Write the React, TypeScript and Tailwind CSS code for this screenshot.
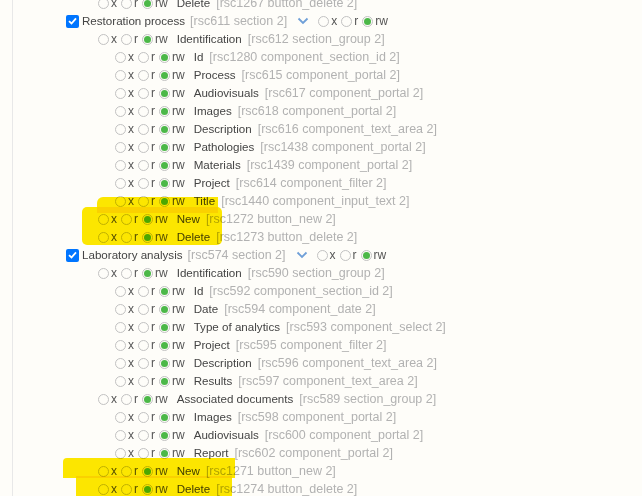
import React from "react";

type Row = { level: 0 | 1 | 2; label: string; meta: string };

const rows: Row[] = [
  { level: 1, label: "Delete", meta: "[rsc1267 button_delete 2]" },
  { level: 0, label: "Restoration process", meta: "[rsc611 section 2]" },
  { level: 1, label: "Identification", meta: "[rsc612 section_group 2]" },
  { level: 2, label: "Id", meta: "[rsc1280 component_section_id 2]" },
  { level: 2, label: "Process", meta: "[rsc615 component_portal 2]" },
  { level: 2, label: "Audiovisuals", meta: "[rsc617 component_portal 2]" },
  { level: 2, label: "Images", meta: "[rsc618 component_portal 2]" },
  { level: 2, label: "Description", meta: "[rsc616 component_text_area 2]" },
  { level: 2, label: "Pathologies", meta: "[rsc1438 component_portal 2]" },
  { level: 2, label: "Materials", meta: "[rsc1439 component_portal 2]" },
  { level: 2, label: "Project", meta: "[rsc614 component_filter 2]" },
  { level: 2, label: "Title", meta: "[rsc1440 component_input_text 2]" },
  { level: 1, label: "New", meta: "[rsc1272 button_new 2]" },
  { level: 1, label: "Delete", meta: "[rsc1273 button_delete 2]" },
  { level: 0, label: "Laboratory analysis", meta: "[rsc574 section 2]" },
  { level: 1, label: "Identification", meta: "[rsc590 section_group 2]" },
  { level: 2, label: "Id", meta: "[rsc592 component_section_id 2]" },
  { level: 2, label: "Date", meta: "[rsc594 component_date 2]" },
  { level: 2, label: "Type of analytics", meta: "[rsc593 component_select 2]" },
  { level: 2, label: "Project", meta: "[rsc595 component_filter 2]" },
  { level: 2, label: "Description", meta: "[rsc596 component_text_area 2]" },
  { level: 2, label: "Results", meta: "[rsc597 component_text_area 2]" },
  { level: 1, label: "Associated documents", meta: "[rsc589 section_group 2]" },
  { level: 2, label: "Images", meta: "[rsc598 component_portal 2]" },
  { level: 2, label: "Audiovisuals", meta: "[rsc600 component_portal 2]" },
  { level: 2, label: "Report", meta: "[rsc602 component_portal 2]" },
  { level: 1, label: "New", meta: "[rsc1271 button_new 2]" },
  { level: 1, label: "Delete", meta: "[rsc1274 button_delete 2]" },
];

function Radio({ on }: { on?: boolean }) {
  return (
    <span className="flex h-[11px] w-[11px] shrink-0 items-center justify-center rounded-full border border-[#c2c2c2]">
      {on && <span className="h-[7px] w-[7px] rounded-full bg-[#4cb848]" />}
    </span>
  );
}

function Perms() {
  return (
    <span className="flex items-center text-[12px] text-[#555]">
      <Radio />
      <span className="ml-[2px] mr-[4px]">x</span>
      <Radio />
      <span className="ml-[2px] mr-[4px]">r</span>
      <Radio on />
      <span className="ml-[2px]">rw</span>
    </span>
  );
}

function Checkbox() {
  return (
    <span className="flex h-[13px] w-[13px] items-center justify-center rounded-[2px] bg-[#0075ff]">
      <svg width="9" height="8" viewBox="0 0 9 8">
        <path d="M1 4.2 L3.5 6.5 L8 1.3" fill="none" stroke="white" strokeWidth="1.8" />
      </svg>
    </span>
  );
}

function TreeRow({ row }: { row: Row }) {
  if (row.level === 0) {
    return (
      <div className="flex h-[18px] items-center pl-[66px]">
        <Checkbox />
        <span className="ml-[3px] text-[11.6px] text-[#444]">{row.label}</span>
        <span className="ml-[5px] text-[12.5px] text-[#b2b2b2]">{row.meta}</span>
        <svg className="ml-[10px]" width="12" height="8" viewBox="0 0 12 8">
          <path d="M1.5 1.5 L6 6 L10.5 1.5" fill="none" stroke="#6f9fd8" strokeWidth="1.8" />
        </svg>
        <span className="ml-[9px]">
          <Perms />
        </span>
      </div>
    );
  }
  return (
    <div className={`flex h-[18px] items-center ${row.level === 1 ? "pl-[98px]" : "pl-[115px]"}`}>
      <Perms />
      <span className="ml-[9px] text-[11.6px] text-[#444]">{row.label}</span>
      <span className="ml-[6px] text-[12.5px] text-[#b2b2b2]">{row.meta}</span>
    </div>
  );
}

export default function App() {
  return (
    <div className="relative h-[496px] w-[642px] overflow-hidden bg-[#fefdf9] font-['Liberation_Sans',Arial,sans-serif]">
      <div className="absolute left-[12px] top-0 h-full w-px bg-[#e8e8e8]" />
      <div className="-mt-[6px] flex flex-col">
        {rows.map((r, i) => (
          <TreeRow key={i} row={r} />
        ))}
      </div>
      {/* highlighter marks */}
      <div className="pointer-events-none absolute left-[97px] top-[197px] h-[16px] w-[121px] rounded-tl-[6px] bg-[#fde800] mix-blend-multiply" />
      <div className="pointer-events-none absolute left-[82px] top-[207px] h-[38px] w-[140px] rounded-[5px] bg-[#fde800] mix-blend-multiply" />
      <div className="pointer-events-none absolute left-[63px] top-[458px] h-[20px] w-[172px] rounded-tl-[4px] bg-[#fde800] mix-blend-multiply" />
      <div className="pointer-events-none absolute left-[76px] top-[476px] h-[20px] w-[156px] bg-[#fde800] mix-blend-multiply" />
    </div>
  );
}
